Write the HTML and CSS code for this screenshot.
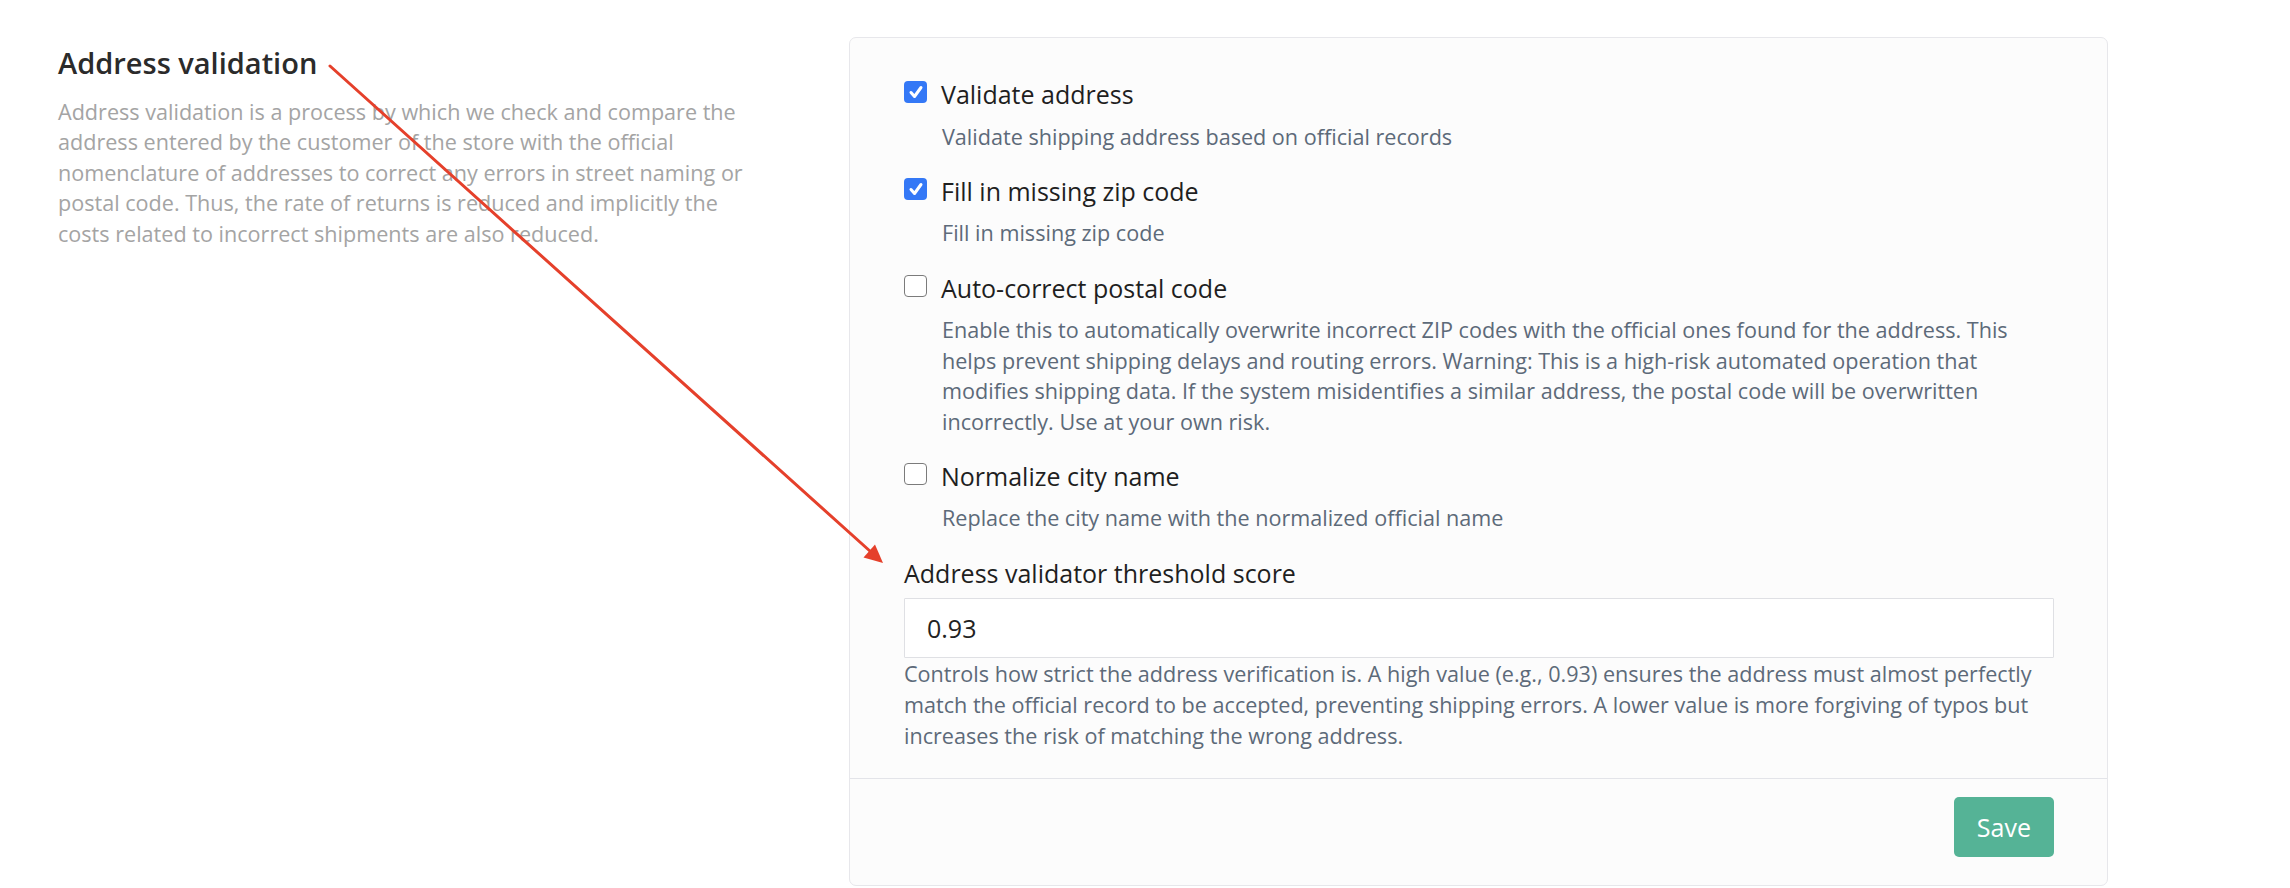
FILE: index.html
```html
<!DOCTYPE html>
<html lang="en">
<head>
<meta charset="utf-8">
<title>Address validation</title>
<link rel="stylesheet" href="styles.css">
</head>
<body>
<div class="page">
  <section class="settings">
    <div class="intro">
      <h2 class="intro-title">Address validation</h2>
      <p class="intro-text">Address validation is a process by which we check and compare the address entered by the customer of the store with the official nomenclature of addresses to correct any errors in street naming or postal code. Thus, the rate of returns is reduced and implicitly the costs related to incorrect shipments are also reduced.</p>
    </div>
    <form class="card">
      <div class="card-body">
        <div class="check-field">
          <div class="check-row">
            <span class="checkbox is-checked"><svg viewBox="0 0 22 22" width="22" height="22"><path d="M6 11.5 L9.5 15.5 L16 6.5" fill="none" stroke="#fff" stroke-width="3" stroke-linecap="round" stroke-linejoin="round"/></svg></span>
            <span class="check-label">Validate address</span>
          </div>
          <p class="field-help">Validate shipping address based on official records</p>
        </div>
        <div class="check-field">
          <div class="check-row">
            <span class="checkbox is-checked"><svg viewBox="0 0 22 22" width="22" height="22"><path d="M6 11.5 L9.5 15.5 L16 6.5" fill="none" stroke="#fff" stroke-width="3" stroke-linecap="round" stroke-linejoin="round"/></svg></span>
            <span class="check-label">Fill in missing zip code</span>
          </div>
          <p class="field-help">Fill in missing zip code</p>
        </div>
        <div class="check-field">
          <div class="check-row">
            <span class="checkbox"></span>
            <span class="check-label">Auto-correct postal code</span>
          </div>
          <p class="field-help">Enable this to automatically overwrite incorrect ZIP codes with the official ones found for the address. This helps prevent shipping delays and routing errors. Warning: This is a high-risk automated operation that modifies shipping data. If the system misidentifies a similar address, the postal code will be overwritten incorrectly. Use at your own risk.</p>
        </div>
        <div class="check-field">
          <div class="check-row">
            <span class="checkbox"></span>
            <span class="check-label">Normalize city name</span>
          </div>
          <p class="field-help">Replace the city name with the normalized official name</p>
        </div>
        <div class="text-field">
          <label class="field-label" for="threshold">Address validator threshold score</label>
          <input class="text-input" id="threshold" type="text" value="0.93">
          <p class="input-help">Controls how strict the address verification is. A high value (e.g., 0.93) ensures the address must almost perfectly match the official record to be accepted, preventing shipping errors. A lower value is more forgiving of typos but increases the risk of matching the wrong address.</p>
        </div>
      </div>
      <div class="card-footer">
        <button class="btn-save" type="button">Save</button>
      </div>
    </form>
  </section>
  <svg class="annotation-arrow" viewBox="0 0 2290 888" width="2290" height="888">
    <line x1="330" y1="66" x2="871" y2="552" stroke="#e5402b" stroke-width="3" stroke-linecap="round"/>
    <polygon points="883,563 863.5,557.5 875,544.5" fill="#e5402b"/>
  </svg>
</div>
</body>
</html>
```

FILE: styles.css
```css
* {
  box-sizing: border-box;
}

body {
  margin: 0;
  background: #ffffff;
  font-family: "Open Sans", "Noto Sans", sans-serif;
  color: #212121;
}

.page {
  position: relative;
  min-height: 888px;
}

.settings {
  display: flex;
  align-items: flex-start;
  padding: 37px 0 0 58px;
}

.intro {
  width: 700px;
  margin-right: 91px;
  padding-top: 9px;
}

.intro-title {
  margin: 0;
  font-size: 29px;
  line-height: 34px;
  font-weight: 600;
  color: #2b2b2b;
}

.intro-text {
  margin: 17px 0 0;
  font-size: 21.6px;
  line-height: 30.4px;
  color: #a4a4a4;
}

.card {
  width: 1259px;
  border: 1px solid #e7e7eb;
  border-radius: 7px;
  background: #fcfcfc;
}

.card-body {
  padding: 38px 53px 26px 54px;
}

.check-field {
  margin-bottom: 21px;
}

.check-row {
  display: flex;
  align-items: flex-start;
  gap: 14px;
}

.checkbox {
  flex: none;
  width: 23px;
  height: 22px;
  margin-top: 5px;
  border: 1.5px solid #7b7b7b;
  border-radius: 4px;
  background: #ffffff;
  display: flex;
  align-items: center;
  justify-content: center;
}

.checkbox.is-checked {
  border: none;
  background: #3478f6;
}

.check-label,
.field-label {
  font-size: 25px;
  line-height: 37.5px;
  color: #1f1f1f;
}

.field-label {
  display: block;
}

.field-help {
  margin: 8px 0 0 38px;
  font-size: 21.6px;
  line-height: 30.4px;
  color: #5d6a79;
}

.text-input {
  display: block;
  width: 100%;
  height: 60px;
  margin-top: 6px;
  padding: 0 22px;
  border: 1px solid #dfe0e4;
  border-radius: 1px;
  background: #ffffff;
  font-family: "Open Sans", "Noto Sans", sans-serif;
  font-size: 25px;
  color: #222222;
}

.input-help {
  margin: 1px 0 0;
  font-size: 21.6px;
  line-height: 30.8px;
  color: #5d6a79;
}

.card-footer {
  display: flex;
  justify-content: flex-end;
  padding: 18px 53px 28px;
  border-top: 1px solid #e3e4e9;
}

.btn-save {
  height: 60px;
  padding: 0 23px;
  border: none;
  border-radius: 5px;
  background: #55b396;
  color: #ffffff;
  font-family: "Open Sans", "Noto Sans", sans-serif;
  font-size: 25px;
}

.annotation-arrow {
  position: absolute;
  left: 0;
  top: 0;
  pointer-events: none;
}
```
